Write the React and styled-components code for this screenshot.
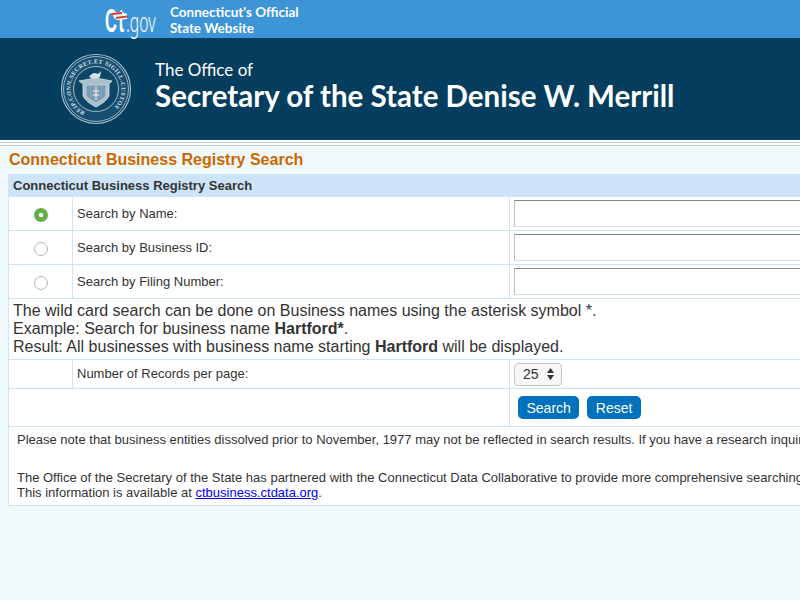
import React from "react";
import styled, { createGlobalStyle } from "styled-components";

const GlobalStyle = createGlobalStyle`
  html, body {
    margin: 0;
    padding: 0;
    height: 100%;
    overflow: hidden;
    background: #f0fafc;
    font-family: "Liberation Sans", Arial, sans-serif;
    color: #333;
  }
`;

const Page = styled.div`
  width: 800px;
  height: 600px;
  overflow: hidden;
`;

const TopBar = styled.div`
  height: 38px;
  background: #3d94d6;
  display: flex;
  align-items: center;
  padding-left: 106px;
`;

const LogoLink = styled.div`
  width: 64px;
  height: 38px;
  position: relative;
  color: #fff;
  flex: none;
`;

const LogoCt = styled.span`
  position: absolute;
  left: -1px;
  top: 4px;
  font-size: 33px;
  line-height: 33px;
  font-weight: 700;
  letter-spacing: 3px;
  transform: scaleX(0.5);
  transform-origin: left top;
`;

const LogoGov = styled.span`
  position: absolute;
  left: 20px;
  top: 7px;
  font-family: "Noto Sans", sans-serif;
  font-size: 28px;
  line-height: 28px;
  font-weight: 300;
  transform: scaleX(0.56);
  transform-origin: left top;
`;

const LogoFlag = styled.svg`
  position: absolute;
  left: 6px;
  top: 12px;
`;

const TopBarText = styled.div`
  color: #fff;
  font-family: Lato, sans-serif;
  font-size: 13.5px;
  font-weight: 700;
  line-height: 16px;
  margin-top: 2px;
`;

const Banner = styled.div`
  height: 102px;
  background: #053d5e;
  display: flex;
  align-items: center;
  padding-left: 60px;
  gap: 23px;
`;

const Titles = styled.div`
  color: #fff;
  margin-top: -8px;
`;

const SubTitle = styled.div`
  font-family: Lato, sans-serif;
  font-size: 17px;
  line-height: 20px;
`;

const MainTitle = styled.div`
  font-family: Lato, sans-serif;
  font-size: 29.5px;
  line-height: 31px;
  font-weight: 700;
  white-space: nowrap;
`;

const Rules = styled.div`
  height: 7px;
  background: linear-gradient(#fff 0 2px, #bcc8d0 2px 3px, #fff 3px 5px, #bcc8d0 5px 6px, #fff 6px);
`;

const Content = styled.div`
  padding: 0 0 0 8px;
`;

const Heading = styled.h1`
  margin: 0;
  padding: 4px 0 5px 1px;
  color: #cc6600;
  font-size: 16px;
  line-height: 18px;
  font-weight: 700;
`;

const Panel = styled.div`
  width: 1100px;
  border: 1px solid #cde4f8;
  border-width: 0 1px 1px;
  background: #fff;
`;

const PanelHeader = styled.div`
  height: 23px;
  background: #cde4f8;
  padding-left: 4px;
  font-size: 13px;
  font-weight: 700;
  line-height: 23px;
  color: #333;
`;

const Row = styled.div`
  display: grid;
  grid-template-columns: 64px 437px 1fr;
  height: ${(p) => p.$height}px;
  box-sizing: border-box;
  border-bottom: 1px solid #cde4f8;
`;

const Cell = styled.div`
  display: flex;
  align-items: center;
  box-sizing: border-box;
  font-size: 13px;
  padding-left: ${(p) => p.$pad || 0}px;
  padding-bottom: ${(p) => p.$lift || 0}px;
  justify-content: ${(p) => (p.$center ? "center" : "flex-start")};
  border-right: ${(p) => (p.$line ? "1px solid #cde4f8" : "none")};
`;

const Radio = styled.input.attrs({ type: "radio", name: "searchBy" })`
  appearance: none;
  width: 14px;
  height: 14px;
  margin: 2px 0 0 1px;
  border-radius: 50%;
  border: 1.5px solid #b5b5b5;
  background: #fff;
  box-sizing: border-box;

  &:checked {
    border: none;
    background: radial-gradient(circle, #fff 0 1.8px, #66ad47 2.6px);
  }
`;

const TextInput = styled.input`
  width: 100%;
  height: 27px;
  margin: 0;
  box-sizing: border-box;
  border: 1px solid #ccc;
  border-top-color: #858585;
  border-left-color: #bbb;
  border-bottom-color: #ddd;
  background: #fff;
`;

const InputCell = styled(Cell)`
  padding: 0 4px;
  margin-top: -1px;
`;

const WildCard = styled.div`
  height: 61px;
  box-sizing: border-box;
  border-bottom: 1px solid #cde4f8;
  padding: 3px 0 0 4px;
  font-size: 16px;
  line-height: 18px;
  color: #333;
`;

const SelectBox = styled.div`
  width: 48px;
  height: 23px;
  box-sizing: border-box;
  border: 1px solid #c6c6c6;
  border-radius: 4px;
  background: #f7f7f7;
  position: relative;
  font-size: 14px;
  line-height: 21px;
  padding-left: 8px;
`;

const SelectArrows = styled.svg`
  position: absolute;
  right: 6px;
  top: 3px;
`;

const Buttons = styled.div`
  display: flex;
  gap: 8px;
  padding-left: 8px;
`;

const Button = styled.button`
  height: 23px;
  padding: 0 8.5px;
  border: none;
  border-radius: 5px;
  background: #0071bc;
  color: #fff;
  font-family: inherit;
  font-size: 14px;
`;

const Note = styled.div`
  height: 78px;
  padding: 5px 0 0 8px;
  box-sizing: border-box;
  font-size: 13px;
  line-height: 15px;
  white-space: nowrap;
`;

const NoteBlock = styled.div`
  margin-bottom: ${(p) => p.$gap || 0}px;
`;

const NoteLink = styled.a`
  color: #0000ee;
  text-decoration: underline;
`;

function Seal() {
  return (
    <svg width="72" height="72" viewBox="0 0 72 72">
      <defs>
        <path id="sealRing" d="M25 59 A25.5 25.5 0 1 1 47 59" />
      </defs>
      <circle cx="36" cy="36" r="34.5" fill="none" stroke="#a9c2d0" strokeWidth="1.2" />
      <circle cx="36" cy="36" r="32.5" fill="#184f70" stroke="#c4d6df" strokeWidth="0.8" />
      <circle cx="36" cy="36" r="22.5" fill="#0d4666" stroke="#c4d6df" strokeWidth="0.8" />
      <text fontFamily="Liberation Serif, serif" fontSize="6" fontWeight="700" fill="#dce7ed" textLength="128" lengthAdjust="spacing">
        <textPath href="#sealRing">REIP.CONN.SECRET.ET SIGILL.CUSTOS</textPath>
      </text>
      <path d="M19 28 L36 25 L52 28 L49 31 L49 43 Q46 49 36 54 Q26 49 23 43 L23 31 Z" fill="#a8c0ce" stroke="#dbe6ec" strokeWidth="0.8" />
      <path d="M26 32 L46 32 L46 43 Q43 47 36 50 Q29 47 26 43 Z" fill="#7d9db1" stroke="#dbe6ec" strokeWidth="0.6" />
      <path d="M36 33 L36 47 M33 38 L39 38 M33 42 L39 42" stroke="#eef4f7" strokeWidth="1" fill="none" />
      <path d="M29 24 Q33 18 38 21 L41 18 L40 24 Q35 27 29 24 Z" fill="#d5e2e9" />
    </svg>
  );
}

export default function App() {
  return (
    <Page>
      <GlobalStyle />
      <TopBar>
        <LogoLink>
          <LogoCt>Ct</LogoCt>
          <LogoGov>.gov</LogoGov>
          <LogoFlag width="16" height="8" viewBox="0 0 16 8">
            <path d="M0 1 L10 0 L15 2 L15 7 L5 8 L2 6 Z" fill="#fff" />
            <path d="M0 1 L10 0 L10 2 L0 3 Z M4 5 L15 3.5 L15 5.5 L4 7 Z" fill="#d8392f" />
          </LogoFlag>
        </LogoLink>
        <TopBarText>
          Connecticut's Official
          <br />
          State Website
        </TopBarText>
      </TopBar>
      <Banner>
        <Seal />
        <Titles>
          <SubTitle>The Office of</SubTitle>
          <MainTitle>Secretary of the State Denise W. Merrill</MainTitle>
        </Titles>
      </Banner>
      <Rules />
      <Content>
        <Heading>Connecticut Business Registry Search</Heading>
        <Panel>
          <PanelHeader>Connecticut Business Registry Search</PanelHeader>
          <Row $height={34}>
            <Cell $center $line>
              <Radio defaultChecked />
            </Cell>
            <Cell $line $pad={4}>Search by Name:</Cell>
            <InputCell>
              <TextInput />
            </InputCell>
          </Row>
          <Row $height={34}>
            <Cell $center $line>
              <Radio />
            </Cell>
            <Cell $line $pad={4}>Search by Business ID:</Cell>
            <InputCell>
              <TextInput />
            </InputCell>
          </Row>
          <Row $height={34}>
            <Cell $center $line>
              <Radio />
            </Cell>
            <Cell $line $pad={4}>Search by Filing Number:</Cell>
            <InputCell>
              <TextInput />
            </InputCell>
          </Row>
          <WildCard>
            The wild card search can be done on Business names using the asterisk symbol *.
            <br />
            Example: Search for business name <b>Hartford*</b>.
            <br />
            Result: All businesses with business name starting <b>Hartford</b> will be displayed.
          </WildCard>
          <Row $height={29}>
            <Cell $line />
            <Cell $line $pad={4} $lift={2}>Number of Records per page:</Cell>
            <Cell $pad={4}>
              <SelectBox>
                25
                <SelectArrows width="9" height="14" viewBox="0 0 9 14">
                  <path d="M4.5 1 L8 6 L1 6 Z M1 8 L8 8 L4.5 13 Z" fill="#333" />
                </SelectArrows>
              </SelectBox>
            </Cell>
          </Row>
          <Row $height={38}>
            <Cell />
            <Cell $line />
            <Cell>
              <Buttons>
                <Button>Search</Button>
                <Button>Reset</Button>
              </Buttons>
            </Cell>
          </Row>
          <Note>
            <NoteBlock $gap={23}>
              Please note that business entities dissolved prior to November, 1977 may not be reflected in search results. If you have a research inquiry
            </NoteBlock>
            <NoteBlock>
              The Office of the Secretary of the State has partnered with the Connecticut Data Collaborative to provide more comprehensive searching
            </NoteBlock>
            <NoteBlock>
              This information is available at <NoteLink href="#">ctbusiness.ctdata.org</NoteLink>.
            </NoteBlock>
          </Note>
        </Panel>
      </Content>
    </Page>
  );
}
